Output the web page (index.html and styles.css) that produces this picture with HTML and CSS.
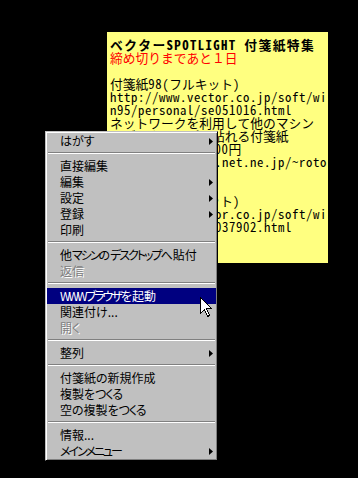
FILE: index.html
```html
<!DOCTYPE html>
<html lang="ja">
<head>
<meta charset="utf-8">
<link rel="stylesheet" href="styles.css">
</head>
<body>
<div class="desk">
  <div class="note">
    <div class="ln title">ベクターSPOTLIGHT 付箋紙特集</div>
    <div class="ln red">締め切りまであと１日</div>
    <div class="ln"> </div>
    <div class="ln">付箋紙<span class="a">98(</span>フルキット<span class="a">)</span></div>
    <div class="ln a">http://www.vector.co.jp/soft/wi</div>
    <div class="ln a">n95/personal/se051016.html</div>
    <div class="ln">ネットワークを利用して他のマシン</div>
    <div class="ln">のデスクトップに貼れる付箋紙</div>
    <div class="ln">シェアウェア<span class="a"> 1,000</span>円</div>
    <div class="ln a">http://www2.big.net.ne.jp/~roto</div>
    <div class="ln"> </div>
    <div class="ln"> </div>
    <div class="ln">付箋紙<span class="a">95(</span>フルキット<span class="a">)</span></div>
    <div class="ln a">http://www.vector.co.jp/soft/wi</div>
    <div class="ln a">n95/personal/se037902.html</div>
  </div>

  <div class="menu">
    <div class="item"><span class="lbl">はがす</span><svg class="arrow" width="4" height="7" viewBox="0 0 4 7"><polygon points="0,0 4,3.5 0,7"/></svg></div>
    <div class="sep"></div>
    <div class="item"><span class="lbl">直接編集</span></div>
    <div class="item"><span class="lbl">編集</span><svg class="arrow" width="4" height="7" viewBox="0 0 4 7"><polygon points="0,0 4,3.5 0,7"/></svg></div>
    <div class="item"><span class="lbl">設定</span><svg class="arrow" width="4" height="7" viewBox="0 0 4 7"><polygon points="0,0 4,3.5 0,7"/></svg></div>
    <div class="item"><span class="lbl">登録</span><svg class="arrow" width="4" height="7" viewBox="0 0 4 7"><polygon points="0,0 4,3.5 0,7"/></svg></div>
    <div class="item"><span class="lbl">印刷</span></div>
    <div class="sep"></div>
    <div class="item"><span class="lbl">他<span class="k">マシン</span>の<span class="k">デスクトップ</span>へ貼付</span></div>
    <div class="item disabled"><span class="lbl">返信</span></div>
    <div class="sep"></div>
    <div class="item active"><span class="lbl"><span class="k">WWWブラウザ</span>を起動</span></div>
    <div class="item"><span class="lbl">関連付け...</span></div>
    <div class="item disabled"><span class="lbl">開く</span></div>
    <div class="sep"></div>
    <div class="item"><span class="lbl">整列</span><svg class="arrow" width="4" height="7" viewBox="0 0 4 7"><polygon points="0,0 4,3.5 0,7"/></svg></div>
    <div class="sep"></div>
    <div class="item"><span class="lbl">付箋紙の新規作成</span></div>
    <div class="item"><span class="lbl">複製を<span class="h">つくる</span></span></div>
    <div class="item"><span class="lbl">空の複製を<span class="h">つくる</span></span></div>
    <div class="sep"></div>
    <div class="item"><span class="lbl">情報...</span></div>
    <div class="item"><span class="lbl"><span class="k">メインメニュー</span></span><svg class="arrow" width="4" height="7" viewBox="0 0 4 7"><polygon points="0,0 4,3.5 0,7"/></svg></div>
  </div>

  <svg class="cursor" width="13" height="21" viewBox="0 0 13 21">
    <path d="M0.5,0.5 L0.5,16.5 L4.5,12.5 L7.5,19.5 L9.5,18.5 L6.5,11.5 L11.5,11.5 Z" fill="#fff" stroke="#000" stroke-width="1" shape-rendering="crispEdges"/>
  </svg>
</div>
</body>
</html>
```

FILE: styles.css
```css
html, body {
  margin: 0;
  padding: 0;
  background: #000;
}

.desk {
  position: relative;
  width: 358px;
  height: 478px;
  overflow: hidden;
  background: #000;
}

.note {
  position: absolute;
  left: 107px;
  top: 32px;
  width: 221px;
  height: 231px;
  box-sizing: border-box;
  padding: 6px 0 0 3px;
  background: #ffff80;
  color: #000;
  font-family: "Noto Sans Mono CJK JP", "Liberation Mono", "Noto Sans CJK JP", monospace;
  font-size: 12.75px;
  line-height: 13px;
  overflow: hidden;
}

.ln {
  height: 13px;
  white-space: pre;
}

.a {
  letter-spacing: 0.625px;
}

.title {
  font-weight: bold;
  letter-spacing: 1.4px;
}

.red {
  color: #ff0000;
}

.menu {
  position: absolute;
  left: 45px;
  top: 131px;
  width: 173px;
  height: 330px;
  box-sizing: border-box;
  background: #c0c0c0;
  border: 1px solid;
  border-color: #c0c0c0 #000 #000 #c0c0c0;
  box-shadow: inset 1px 1px 0 #fff, inset -1px -1px 0 #808080;
  padding: 1px;
  display: flex;
  flex-direction: column;
  font-family: "Noto Sans CJK JP", sans-serif;
  font-feature-settings: "palt";
  font-size: 12px;
  color: #000;
}

.item {
  height: 16px;
  line-height: 16px;
  display: flex;
  align-items: center;
  padding: 0 3px 0 13px;
  white-space: nowrap;
}

.lbl {
  flex: 1;
}

.k {
  letter-spacing: -2px;
}

.h {
  letter-spacing: -1px;
}

.arrow {
  display: block;
  fill: #000;
}

.item.active {
  background: #000080;
  color: #fff;
}

.item.disabled {
  color: #808080;
  text-shadow: 1px 1px 0 #fff;
}

.sep {
  height: 9px;
  box-sizing: border-box;
  padding-top: 3px;
  margin: 0 1px;
}

.sep::before {
  content: "";
  display: block;
  border-top: 1px solid #808080;
  border-bottom: 1px solid #fff;
}

.cursor {
  position: absolute;
  left: 200px;
  top: 297px;
}
```
